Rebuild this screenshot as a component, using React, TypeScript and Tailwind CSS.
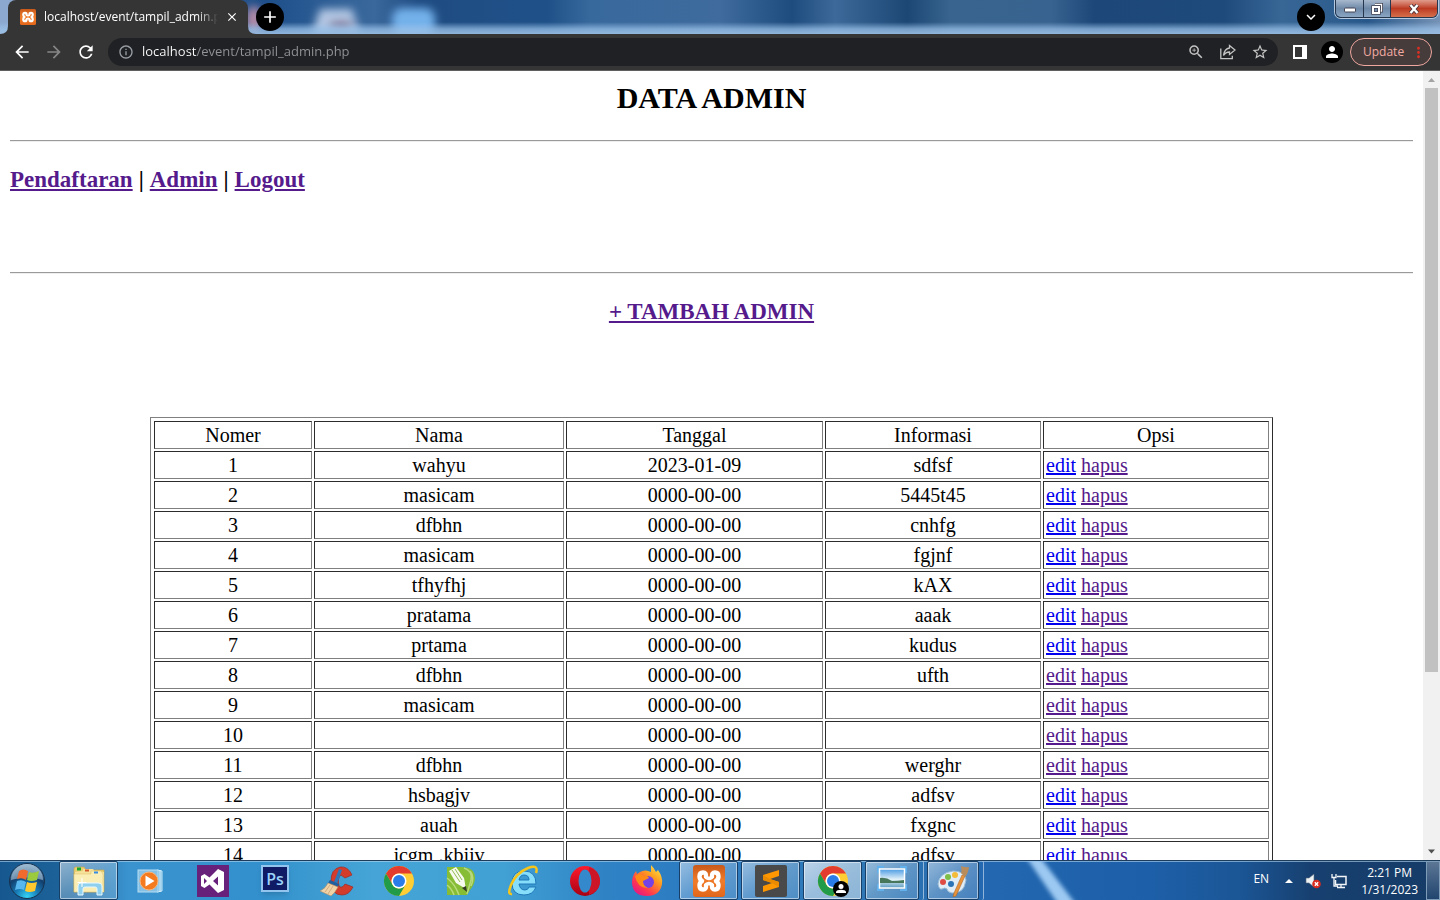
import React from "react";
import { MdArrowBack, MdArrowForward, MdRefresh, MdInfoOutline, MdZoomIn, MdStarBorder, MdPerson, MdClose, MdAdd, MdKeyboardArrowDown, MdMoreVert } from "react-icons/md";

type Row = { nama: string; tanggal: string; info: string; visited?: boolean };

const zero = "0000-00-00";
const rows: Row[] = [
  { nama: "wahyu", tanggal: "2023-01-09", info: "sdfsf" },
  { nama: "masicam", tanggal: zero, info: "5445t45" },
  { nama: "dfbhn", tanggal: zero, info: "cnhfg" },
  { nama: "masicam", tanggal: zero, info: "fgjnf" },
  { nama: "tfhyfhj", tanggal: zero, info: "kAX" },
  { nama: "pratama", tanggal: zero, info: "aaak" },
  { nama: "prtama", tanggal: zero, info: "kudus" },
  { nama: "dfbhn", tanggal: zero, info: "ufth", visited: true },
  { nama: "masicam", tanggal: zero, info: "", visited: true },
  { nama: "", tanggal: zero, info: "", visited: true },
  { nama: "dfbhn", tanggal: zero, info: "werghr", visited: true },
  { nama: "hsbagjv", tanggal: zero, info: "adfsv" },
  { nama: "auah", tanggal: zero, info: "fxgnc" },
  { nama: "jcgm .kbjjv", tanggal: zero, info: "adfsv" },
];

const cell = "h-7 border border-t-[#2c2c2c] border-l-[#2c2c2c] border-b-[#808080] border-r-[#808080] px-0.5 py-0";
const visitedLink = "text-[#551a8b] underline";

function XamppIcon({ className }: { className: string }) {
  return (
    <svg viewBox="0 0 32 32" className={className} aria-hidden="true">
      <defs>
        <linearGradient id="xampp" x1="0" y1="0" x2="0" y2="1">
          <stop offset="0" stopColor="#c9591a" />
          <stop offset="0.5" stopColor="#f07c2a" />
          <stop offset="1" stopColor="#e2661a" />
        </linearGradient>
      </defs>
      <rect width="32" height="32" rx="3" fill="url(#xampp)" />
      <g fill="none" stroke="#fff" strokeWidth="4.400" strokeLinejoin="round" strokeLinecap="round">
        <path d="M13 11.500Q13.500 7.500 10 7.500Q6.500 7.500 6.500 11.500Q6.500 14.500 9 16Q6.500 17.500 6.500 20.500Q6.500 24.500 10 24.500Q13.500 24.500 13 20.500" />
        <path d="M19 11.500Q18.500 7.500 22 7.500Q25.500 7.500 25.500 11.500Q25.500 14.500 23 16Q25.500 17.500 25.500 20.500Q25.500 24.500 22 24.500Q18.500 24.500 19 20.500" />
        <path d="M13 11.500Q13 13 16 13.500Q19 13 19 11.500M13 20.500Q13 19 16 18.500Q19 19 19 20.500" strokeWidth="3.500" />
      </g>
    </svg>
  );
}

function ChromeIcon({ badge }: { badge?: boolean }) {
  return (
    <svg viewBox="0 0 32 32" className="size-8 shrink-0" aria-hidden="true">
      <circle cx="16" cy="16" r="15" fill="#ffcd34" />
      <path d="M3 8.500A15 15 0 0 1 29 8.500H16A7.500 7.500 0 0 0 9.500 19.800Z" fill="#e33b2e" />
      <path d="M3 8.500L9.500 19.750A7.500 7.500 0 0 0 22.500 19.750L16 31A15 15 0 0 1 3 8.500Z" fill="#229b48" />
      <circle cx="16" cy="16" r="7.500" fill="#fff" />
      <circle cx="16" cy="16" r="6" fill="#2a7de8" />
      {badge && (
        <g>
          <circle cx="24" cy="24" r="8" fill="#000" />
          <circle cx="24" cy="21.500" r="2.500" fill="#fff" />
          <path d="M19 28v-1c0-3 10-3 10 0v1z" fill="#fff" />
        </g>
      )}
    </svg>
  );
}

function ShareIcon() {
  return (
    <svg viewBox="0 0 16 16" className="size-4" fill="none" stroke="#c4c4c4" strokeWidth="1.300" aria-hidden="true">
      <path d="M.8 4.500v10.200h11.500v-3" />
      <path d="M9.500 1.500L15 6l-5.500 4.500V8C6.500 8 5 9 3.500 11.500C4 7.500 6 4.500 9.500 4z" />
    </svg>
  );
}

function TitleBar() {
  return (
    <header className="relative flex h-[34px] shrink-0 items-stretch overflow-hidden bg-[linear-gradient(90deg,#8ca8cf_0%,#8ca8cf_1%,#1d4d88_18%,#2f5f96_23%,#3a689c_26%,#1f4c82_29%,#1f5188_38%,#38699d_41%,#3f6b9e_50%,#1e4c7e_55%,#3c6999_58%,#1c4775_63%,#38648f_66%,#386390_73%,#1c4778_76%,#1e4a7b_85%,#386796_89%,#28588a_95%,#7693b6_100%)]">
      <svg className="absolute inset-0 h-full w-full" viewBox="0 0 1440 34" preserveAspectRatio="none" aria-hidden="true">
        <defs>
          <filter id="soft" x="-50%" y="-50%" width="200%" height="200%"><feGaussianBlur stdDeviation="4" /></filter>
          <linearGradient id="glow" x1="0" y1="0" x2="0" y2="1">
            <stop offset="0.65" stopColor="#9cc3ea" stopOpacity="0" />
            <stop offset="0.85" stopColor="#9cc3ea" stopOpacity="0.7" />
            <stop offset="1" stopColor="#9cc0e4" stopOpacity="0.9" />
          </linearGradient>
        </defs>
        <g filter="url(#soft)">
          <path d="M320 9H352L360 34H312Z" fill="#b4c8e4" />
          <ellipse cx="341" cy="25" rx="13" ry="4" fill="#75648b" />
          <rect x="392" y="8" width="43" height="28" rx="10" fill="#73b1eb" />
          <ellipse cx="254" cy="20" rx="8" ry="14" fill="#b58ca7" />
        </g>
        <rect width="1440" height="34" fill="url(#glow)" />
      </svg>
      <div className="relative ml-2 flex w-60 items-center rounded-t-lg bg-[#353535] pl-3 pr-2 text-white">
        <svg viewBox="0 0 8 8" className="absolute bottom-0 right-full size-2" aria-hidden="true"><path d="M0 8Q8 8 8 0V8z" fill="#353535" /></svg>
        <svg viewBox="0 0 8 8" className="absolute bottom-0 left-full size-2" aria-hidden="true"><path d="M8 8Q0 8 0 0V8z" fill="#353535" /></svg>
        <XamppIcon className="size-4 shrink-0" />
        <span className="ml-2 w-[174px] overflow-hidden whitespace-nowrap text-xs [mask-image:linear-gradient(90deg,#000_88%,transparent_100%)]">localhost/event/tampil_admin.php</span>
        <button type="button" aria-label="Close tab" className="ml-1.5 flex size-4 shrink-0 items-center justify-center"><MdClose size={14} /></button>
      </div>
      <button type="button" aria-label="New tab" className="relative ml-2 mt-[3px] flex size-7 items-center justify-center rounded-full bg-black text-white"><MdAdd size={20} /></button>
      <button type="button" aria-label="Search tabs" className="relative ml-auto mt-[3px] flex size-7 items-center justify-center rounded-full bg-black text-white"><MdKeyboardArrowDown size={18} /></button>
      <div className="relative ml-2.5 mr-0.5 flex h-[18px] overflow-hidden rounded-b-md border border-t-0 border-[#26364c] shadow-[0_0_0_1px_#b5c9e0]">
        <button type="button" aria-label="Minimize" className="flex w-7 items-center justify-center border-r border-[#26364c] bg-linear-to-b from-[#a8b9cd] via-[#6f89a8] to-[#8aa6c3]">
          <svg viewBox="0 0 14 8" className="h-2 w-3.5" aria-hidden="true"><rect x="1.500" y="3" width="11" height="4" rx="1" fill="#fff" stroke="#445" /></svg>
        </button>
        <button type="button" aria-label="Restore" className="flex w-[27px] items-center justify-center border-r border-[#26364c] bg-linear-to-b from-[#a8b9cd] via-[#6f89a8] to-[#8aa6c3]">
          <svg viewBox="0 0 12 12" className="size-3" fill="none" aria-hidden="true"><path d="M4 1.500h6.500V8H9" stroke="#445" strokeWidth="3" /><path d="M4 1.500h6.500V8H9" stroke="#fff" strokeWidth="1.300" /><rect x="2" y="4" width="6" height="6" stroke="#445" strokeWidth="3.500" /><rect x="2" y="4" width="6" height="6" stroke="#fff" strokeWidth="2" /></svg>
        </button>
        <button type="button" aria-label="Close" className="flex w-[46px] items-center justify-center bg-linear-to-b from-[#df9b8c] via-[#bc3a22] to-[#d56f4c]">
          <svg viewBox="0 0 12 10" className="h-2.5 w-3" fill="none" aria-hidden="true"><path d="M2.500 1l7 8M9.500 1l-7 8" stroke="#4a3038" strokeWidth="4" /><path d="M2.500 1l7 8M9.500 1l-7 8" stroke="#fff" strokeWidth="2.400" /></svg>
        </button>
      </div>
    </header>
  );
}

function Toolbar() {
  return (
    <div className="flex h-[37px] shrink-0 items-center border-b border-[#5f5f5f] bg-[#353535] pl-3 pr-2 text-white">
      <button type="button" aria-label="Back" className="flex size-5 items-center justify-center"><MdArrowBack size={20} /></button>
      <button type="button" aria-label="Forward" className="ml-3 flex size-5 items-center justify-center text-[#868686]"><MdArrowForward size={20} /></button>
      <button type="button" aria-label="Reload" className="ml-3 flex size-5 items-center justify-center"><MdRefresh size={20} /></button>
      <div className="ml-3 flex h-7 flex-1 items-center rounded-full bg-[#202124] pl-2.5 pr-[9px]">
        <MdInfoOutline size={16} className="shrink-0 text-[#9aa0a6]" />
        <input aria-label="Address" defaultValue="localhost/event/tampil_admin.php" className="ml-2 flex-1 bg-[linear-gradient(90deg,#fff_55px,#929497_55px)] bg-clip-text text-[13px] text-transparent outline-none" />
        <div className="flex items-center gap-[15px] text-[#c4c4c4]">
          <button type="button" aria-label="Zoom"><MdZoomIn size={18} /></button>
          <button type="button" aria-label="Share"><ShareIcon /></button>
          <button type="button" aria-label="Bookmark"><MdStarBorder size={18} /></button>
        </div>
      </div>
      <button type="button" aria-label="Side panel" className="ml-[15px] h-3.5 w-3.5 border-2 border-r-[5px] border-white" />
      <button type="button" aria-label="Profile" className="ml-3.5 flex size-[22px] items-center justify-center rounded-full bg-black"><MdPerson size={18} /></button>
      <button type="button" className="ml-[7px] flex h-7 w-[82px] items-center justify-between rounded-full border border-[#f0a79f] bg-[#463c3b] pl-3 pr-1 text-xs text-[#f3aba3]">
        Update
        <MdMoreVert size={17} className="text-[#d93025]" />
      </button>
    </div>
  );
}

function Page() {
  return (
    <div className="flex min-h-0 flex-1">
      <main className="min-w-0 flex-1 overflow-hidden p-2.5 font-['Liberation_Serif',serif] text-xl text-black">
        <h1 className="text-center text-[30px] leading-[34px] font-bold">DATA ADMIN</h1>
        <hr className="mt-[25px] h-0.5 border-t border-b border-t-[#9a9a9a] border-b-[#eeeeee]" />
        <nav className="mt-6 flex gap-1.5 text-[23px] leading-[27px] font-bold">
          <a href="#pendaftaran" className={visitedLink}>Pendaftaran</a>
          <span>|</span>
          <a href="#admin" className={visitedLink}>Admin</a>
          <span>|</span>
          <a href="#logout" className={visitedLink}>Logout</a>
        </nav>
        <hr className="mt-[79px] h-0.5 border-t border-b border-t-[#9a9a9a] border-b-[#eeeeee]" />
        <h2 className="mt-6 text-center text-[23px] leading-[27px] font-bold"><a href="#tambah" className={visitedLink}>+ TAMBAH ADMIN</a></h2>
        <table className="mx-auto mt-[92px] w-4/5 table-fixed border-separate border-spacing-0.5 border border-t-[#808080] border-l-[#808080] border-b-[#2c2c2c] border-r-[#2c2c2c] p-px leading-[23px]">
          <colgroup>
            <col className="w-[158px]" />
            <col className="w-[250px]" />
            <col className="w-[257px]" />
            <col className="w-[216px]" />
            <col className="w-[226px]" />
          </colgroup>
          <thead>
            <tr>
              {["Nomer", "Nama", "Tanggal", "Informasi", "Opsi"].map((h) => (
                <th key={h} scope="col" className={`${cell} font-normal`}>{h}</th>
              ))}
            </tr>
          </thead>
          <tbody>
            {rows.map((r, i) => (
              <tr key={i} className="text-center">
                <td className={cell}>{i + 1}</td>
                <td className={cell}>{r.nama}</td>
                <td className={cell}>{r.tanggal}</td>
                <td className={cell}>{r.info}</td>
                <td className={`${cell} text-left`}>
                  <a href="#edit" className={r.visited ? "text-[#551a8b] underline" : "text-[#0000ee] underline"}>edit</a>{" "}
                  <a href="#hapus" className={visitedLink}>hapus</a>
                </td>
              </tr>
            ))}
          </tbody>
        </table>
      </main>
      <div className="flex w-[17px] shrink-0 flex-col items-center bg-[#f1f1f1]" aria-hidden="true">
        <svg viewBox="0 0 17 17" className="size-[17px] shrink-0"><path d="M5 11l3.500-4 3.500 4z" fill="#a3a3a3" /></svg>
        <div className="h-[74%] w-[13px] bg-[#c1c1c1]" />
        <svg viewBox="0 0 17 17" className="mt-auto size-[17px] shrink-0"><path d="M5 6.500l3.500 4 3.500-4z" fill="#505050" /></svg>
      </div>
    </div>
  );
}

function StartOrb() {
  return (
    <svg viewBox="0 0 38 38" className="size-[38px]" aria-hidden="true">
      <defs>
        <radialGradient id="orb" cx="0.5" cy="0.95" r="0.95">
          <stop offset="0" stopColor="#35d4f5" /><stop offset="0.35" stopColor="#1779b5" /><stop offset="0.65" stopColor="#123f6d" /><stop offset="1" stopColor="#7ba5c4" />
        </radialGradient>
      </defs>
      <circle cx="19" cy="19" r="17.500" fill="url(#orb)" stroke="#17324f" />
      <path d="M3 18A16 16 0 0 1 35 18Q19 13 3 18Z" fill="#c7dcea" opacity=".5" />
      <path d="M11 9Q15 6 20 9L18 18Q14 15 9 17Z" fill="#ef6a2c" />
      <path d="M21 10Q25 12 31 9L29 18Q23 20 19 18Z" fill="#9bcb3c" />
      <path d="M9 19Q14 17 18 20L16 28Q12 26 7 28Z" fill="#59b7ef" />
      <path d="M19 20Q23 22 29 20L27 29Q21 31 17 29Z" fill="#fdc92f" />
    </svg>
  );
}

function FolderIcon() {
  return (
    <svg viewBox="0 0 34 30" className="h-[30px] w-[34px]" aria-hidden="true">
      <path d="M2 6V3Q2 1 4 1H12L14 4H32V26H2Z" fill="#e8cd73" stroke="#c7a545" strokeWidth=".6" />
      <path d="M5 1.500h4v3H5z" fill="#18a62e" /><path d="M11 5V3h10l2 3h9v20H3V6z" fill="#f6e29a" /><path d="M13 3.500h4v2h-4z" fill="#d4562c" />
      <path d="M19 7V5h10l2 3v18H2V8h17z" fill="#fbeeb5" stroke="#d8bc65" strokeWidth=".5" /><path d="M22 5.500h4v2h-4z" fill="#398de0" />
      <path d="M6 29V20Q6 17 9 17H26Q30 17 30 20V29H25V23Q25 21 23 21H13Q11 21 11 23V29Z" fill="#8fd0ee" stroke="#e6f8ff" />
      <path d="M10 12v9M5.500 16.500h9" stroke="#fff" />
    </svg>
  );
}

function MediaIcon() {
  return (
    <svg viewBox="0 0 30 30" className="size-[30px]" aria-hidden="true">
      <path d="M21 4l5 1v20l-5 1z" fill="#75b9e2" stroke="#c8e7f7" /><rect x="2" y="4" width="20" height="22" fill="#86c0e4" stroke="#b5dff5" />
      <path d="M24 4v22" stroke="#e2f5ff" /><circle cx="13" cy="15" r="9" fill="#f47b20" stroke="#f9b67b" /><path d="M9.500 9.500l9 5.500-9 5.500z" fill="#fff" />
    </svg>
  );
}

function VisualStudioIcon() {
  return (
    <svg viewBox="0 0 32 32" className="size-8" aria-hidden="true">
      <rect width="32" height="32" fill="#68217a" />
      <path d="M21 4l6 3v18l-6 3-8.500-8.500-5 3.500L4 21V11l3.500-2 5 3.500zM21 11.500L16 16l5 4.500zM7 13v6l3-3z" fill="#fff" fillRule="evenodd" />
    </svg>
  );
}

function PhotoshopIcon() {
  return (
    <span className="mb-1 flex h-[27px] w-7 items-center justify-center border-2 border-[#91c5ef] bg-[#101b65] text-base font-semibold text-[#9bd2fa] shadow-md">Ps</span>
  );
}

function CCleanerIcon() {
  return (
    <svg viewBox="0 0 34 32" className="h-8 w-[34px]" aria-hidden="true">
      <path d="M32 10Q28 1 20 2Q11 4 11 16Q11 30 22 30Q29 30 33 22L25 19Q22 24 19 21Q17 13 21 10L25 13Z" fill="#d33b2b" stroke="#9f2b23" strokeWidth=".7" />
      <path d="M19 4l3 1-5 14-3-2z" fill="#2c77b9" /><path d="M10 15l9 4-1 3-10-4z" fill="#1e5f9f" />
      <path d="M8 18l10 4q-3 6-7 9L0 26q6-3 8-8z" fill="#f0d2a7" stroke="#b98f65" strokeWidth=".6" /><path d="M10 20l-5 7M13 21l-5 8" stroke="#c69a6d" strokeWidth=".7" />
    </svg>
  );
}

function CorelIcon() {
  return (
    <svg viewBox="0 0 30 30" className="size-[30px]" aria-hidden="true">
      <path d="M1 1H15Q29 1 29 12Q29 18 24 24L21 29H1Z" fill="#86bd35" />
      <path d="M18 2Q27 5 25 14L21 28M24 5Q29 11 25 20" stroke="#b7d87f" strokeWidth="1.500" fill="none" />
      <path d="M1 12Q9 18 13 29M1 19Q6 23 8 29" stroke="#b9da7a" strokeWidth="1.500" fill="none" />
      <path d="M3 5L10 1L18 12L20 23L10 17Z" fill="#f7faee" /><path d="M6 4l8 12M9 3l7 11" stroke="#93bb54" /><path d="M16 22l4-2 1 6z" fill="#343a25" />
    </svg>
  );
}

function IeIcon() {
  return (
    <svg viewBox="0 0 32 32" className="size-8" aria-hidden="true">
      <path d="M29 22Q26 30 17 30Q5 30 5 18Q5 6 17 6Q29 6 29 19H12Q13 25 18 25Q21 25 22 22ZM12 15H22Q22 10 17 10Q13 10 12 15Z" fill="#86defb" stroke="#1f78b8" fillRule="evenodd" />
      <path d="M5 29Q0 30 4 20Q9 8 21 3Q32-1 29 8" fill="none" stroke="#f6c51c" strokeWidth="2.500" />
    </svg>
  );
}

function OperaIcon() {
  return (
    <svg viewBox="0 0 32 32" className="size-8" aria-hidden="true">
      <defs><linearGradient id="opera" x1="0" y1="0" x2="0" y2="1"><stop offset="0" stopColor="#ff1b2d" /><stop offset="1" stopColor="#a70014" /></linearGradient></defs>
      <circle cx="16" cy="16" r="15" fill="url(#opera)" /><path d="M20 2Q30 5 31 16Q30 27 20 30Z" fill="#cc1526" /><ellipse cx="16" cy="16" rx="6.500" ry="11.500" fill="#3389cb" />
    </svg>
  );
}

function FirefoxIcon() {
  return (
    <svg viewBox="0 0 32 32" className="size-8" aria-hidden="true">
      <defs><linearGradient id="fox" x1="1" y1="0" x2="0.200" y2="1"><stop offset="0" stopColor="#fff44f" /><stop offset=".4" stopColor="#ff9a1f" /><stop offset=".75" stopColor="#ff3750" /><stop offset="1" stopColor="#e31587" /></linearGradient></defs>
      <path d="M20 0Q23 3 25 7L27 5Q32 12 31 19Q29 31 16 31Q2 31 1 18Q1 11 5 6L6 9L9 7Q14 4 20 7Z" fill="url(#fox)" />
      <circle cx="17" cy="17" r="6" fill="#7542e5" /><path d="M4 11Q10 7 12 11Q17 10 18 13L12 16Q12 21 17 23Q7 24 4 11Z" fill="#ff8a16" />
    </svg>
  );
}

function SublimeIcon() {
  return (
    <svg viewBox="0 0 32 32" className="size-8" aria-hidden="true"><rect width="32" height="32" rx="2" fill="#494949" /><path d="M8 10l16-5v6l-9 3 9 3v5L8 27v-6l9-3-9-3z" fill="#ff9800" /><path d="M8 15l9 3 7 4v-5l-9-3-7-4z" fill="#e98a00" /></svg>
  );
}

function PhotosIcon() {
  return (
    <svg viewBox="0 0 30 25" className="mb-1 h-[25px] w-[30px]" aria-hidden="true">
      <defs><linearGradient id="sky" x1="0" y1="0" x2="0" y2="1"><stop offset="0" stopColor="#4b9be3" /><stop offset="0.550" stopColor="#e3f1f8" /><stop offset="1" stopColor="#5a9ac0" /></linearGradient></defs>
      <path d="M1 7V1h6M23 1h6v6M1 18v6h6M29 18v6h-6" fill="none" stroke="#62b0eb" strokeWidth="2" /><rect x="2.500" y="3" width="25" height="19" fill="url(#sky)" stroke="#fff" strokeWidth="1.500" /><path d="M3 12q6-1 12 3 6 0 12-1v3H3z" fill="#47775b" />
    </svg>
  );
}

function PaintIcon() {
  return (
    <svg viewBox="0 0 32 32" className="size-8" aria-hidden="true">
      <path d="M1 19Q2 8 16 6Q28 6 29 15Q28 19 27 22Q24 28 15 28Q10 27 10 24Q8 22 5 24Q2 25 1 19Z" fill="#e0edf7" stroke="#9abbd5" />
      <circle cx="6" cy="17" r="3" fill="#dd4b43" /><circle cx="11" cy="12" r="3" fill="#7ebd46" /><circle cx="18" cy="10" r="3" fill="#f4bc39" /><circle cx="14" cy="19" r="3" fill="#2b74b6" />
      <path d="M25 10l3 1-9 20-3 1 1-4z" fill="#e7933c" stroke="#a45e1e" strokeWidth=".5" /><path d="M24 8q1-2 0-7 5 2 8 1-1 7-4 10z" fill="#b98c5b" />
    </svg>
  );
}

const taskFrame = "flex h-[39px] items-center justify-center rounded-xs border border-[#173f68] bg-linear-to-br from-white/50 via-white/25 to-white/15 shadow-[inset_0_0_0_1px_rgba(255,255,255,0.5)]";
const stackFrame = "flex rounded-xs border-r border-white/50 pr-1";
const plainButton = "flex h-10 w-[62px] items-center justify-center";

function Taskbar() {
  return (
    <footer className="relative flex h-10 shrink-0 items-center overflow-hidden border-t border-[#1e3d5c] bg-[linear-gradient(90deg,#16578f_0%,#1c6299_4%,#3a93cf_9%,#3390cc_18%,#46a5d6_26%,#41a0d4_35%,#2f83c5_42%,#2c7bc2_48%,#2f78b5_60%,#2267b0_69%,#1d5fa8_80%,#1b5696_86%,#174070_91%,#163b67_100%)] shadow-[inset_0_1px_0_rgba(180,215,240,0.6)]">
      <svg viewBox="0 0 130 40" className="absolute left-[990px] h-10 w-[130px]" aria-hidden="true">
        <defs><filter id="beam"><feGaussianBlur stdDeviation="2" /></filter></defs>
        <path d="M36-4h14L88 46H70z" fill="#9cc9f2" filter="url(#beam)" />
      </svg>
      <button type="button" aria-label="Start" className="flex w-[54px] justify-center"><StartOrb /></button>
      <button type="button" aria-label="Explorer" className={`ml-[5px] w-[59px] ${taskFrame}`}><FolderIcon /></button>
      <div className="ml-0.5 flex items-center">
        <button type="button" aria-label="Media Player" className={plainButton}><MediaIcon /></button>
        <button type="button" aria-label="Visual Studio" className={plainButton}><VisualStudioIcon /></button>
        <button type="button" aria-label="Photoshop" className={plainButton}><PhotoshopIcon /></button>
        <button type="button" aria-label="CCleaner" className={plainButton}><CCleanerIcon /></button>
        <button type="button" aria-label="Chrome" className={plainButton}><ChromeIcon /></button>
        <button type="button" aria-label="CorelDRAW" className={plainButton}><CorelIcon /></button>
        <button type="button" aria-label="Internet Explorer" className={plainButton}><IeIcon /></button>
        <button type="button" aria-label="Opera" className={plainButton}><OperaIcon /></button>
        <button type="button" aria-label="Firefox" className={plainButton}><FirefoxIcon /></button>
      </div>
      <div className="relative ml-px flex gap-[3px]">
        <button type="button" aria-label="XAMPP" className={`w-[59px] ${taskFrame}`}><XamppIcon className="size-8" /></button>
        <button type="button" aria-label="Sublime Text" className={`w-[59px] ${taskFrame}`}><SublimeIcon /></button>
        <button type="button" aria-label="Chrome window" className={`w-[59px] bg-white/35 ${taskFrame}`}><ChromeIcon badge /></button>
        <button type="button" aria-label="Photo Viewer" className={stackFrame}><span className={`w-[54px] ${taskFrame}`}><PhotosIcon /></span></button>
        <button type="button" aria-label="Paint" className={stackFrame}><span className={`w-[52px] ${taskFrame}`}><PaintIcon /></span></button>
      </div>
      <div className="relative ml-auto flex h-full items-center text-xs text-white">
        <span className="mr-4 pb-1">EN</span>
        <svg viewBox="0 0 8 5" className="mr-3 h-[5px] w-2" aria-hidden="true"><path d="M0 5l4-4 4 4z" fill="#fff" /></svg>
        <svg viewBox="0 0 16 16" className="mr-2.5 size-4" aria-hidden="true"><path d="M1 5h3l5-4v13l-5-4H1z" fill="#eef2f5" stroke="#56677a" strokeWidth=".6" /><circle cx="11.500" cy="11" r="4.300" fill="#d92b20" /><path d="M9.800 9.300l3.400 3.400m0-3.400l-3.400 3.400" stroke="#fff" strokeWidth="1.400" /></svg>
        <svg viewBox="0 0 16 16" className="mr-3.5 size-4" fill="none" stroke="#f2f5f8" aria-hidden="true"><path d="M6 3.500h9v8H4.500V7" strokeWidth="1.500" /><path d="M1 1v3.500h4V1M3 5v8h4M6 14.500h8M10 12v2" strokeWidth="1.300" /></svg>
        <span className="mr-2 text-center leading-[17px]">2:21 PM<br />1/31/2023</span>
        <button type="button" aria-label="Show desktop" className="h-full w-3.5 border border-[#7f9cb8] bg-linear-to-b from-white/30 to-white/5" />
      </div>
    </footer>
  );
}

export default function App() {
  return (
    <div className="flex h-screen flex-col overflow-hidden bg-white font-['Open_Sans','Noto_Sans',sans-serif]">
      <TitleBar />
      <Toolbar />
      <Page />
      <Taskbar />
    </div>
  );
}
